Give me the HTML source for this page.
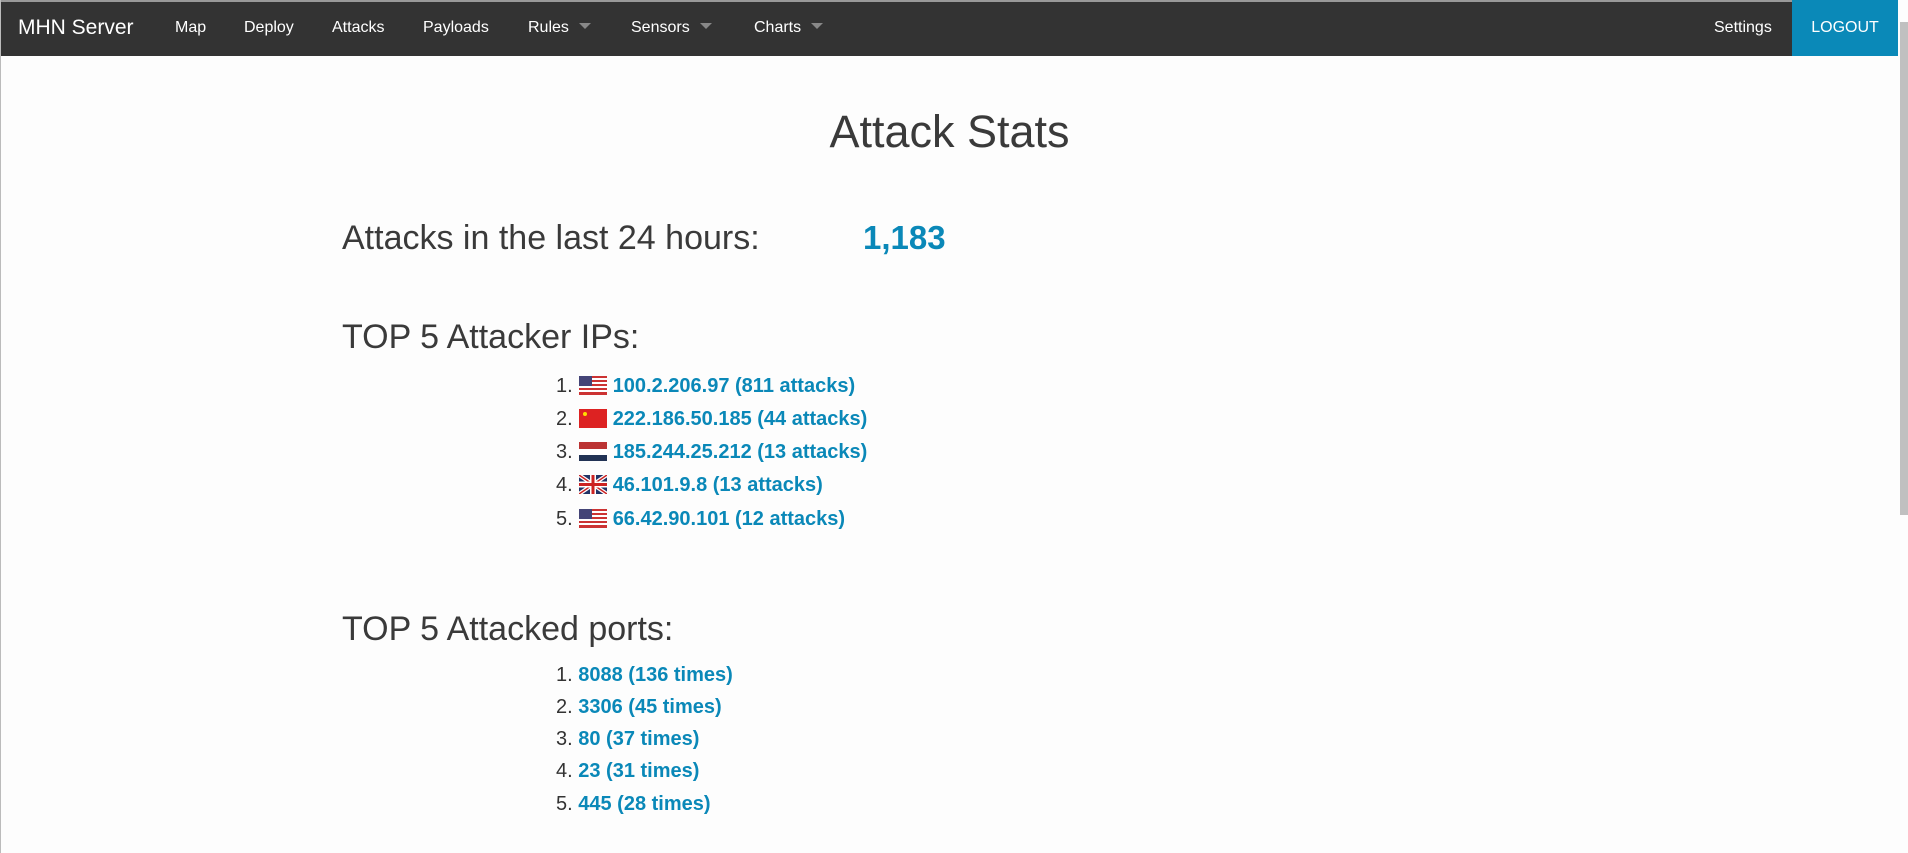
<!DOCTYPE html>
<html><head><meta charset="utf-8"><style>
*{margin:0;padding:0;box-sizing:border-box}
body{width:1908px;height:853px;overflow:hidden;background:#fdfdfd;font-family:"Liberation Sans",sans-serif;position:relative;border-left:1px solid #bbb}
.nav{position:absolute;left:0;top:0;width:1897px;height:56px;background:#333;border-top:2px solid #999}
.nav span{position:absolute;top:17px;color:#fff;font-size:16px}
.car{display:inline-block;width:0;height:0;border-left:6px solid transparent;border-right:6px solid transparent;border-top:6px solid #888;margin-left:10px;vertical-align:3px}
.logout{position:absolute;left:1791px;top:0;width:106px;height:56px;background:#0a89b8;color:#fff;font-size:16px;text-align:center;line-height:56px}
.sb{position:absolute;left:1899px;top:22px;width:9px;height:493px;background:#c0c0c0}
.t{position:absolute;color:#333;white-space:nowrap}
.l{position:absolute;font-size:20px;white-space:nowrap;color:#333}
.l b{color:#0a88b8}
.f{display:inline-block;width:28px;height:19px;vertical-align:-3px;margin:0 6px 0 6px}
</style></head><body>
<div class="nav">
<span style="left:17px;top:14px;font-size:21px">MHN Server</span>
<span style="left:174px">Map</span>
<span style="left:243px">Deploy</span>
<span style="left:331px">Attacks</span>
<span style="left:422px">Payloads</span>
<span style="left:527px">Rules<i class="car"></i></span>
<span style="left:630px">Sensors<i class="car"></i></span>
<span style="left:753px">Charts<i class="car"></i></span>
<span style="left:1713px">Settings</span>
</div>
<div class="logout">LOGOUT</div>
<div class="sb"></div>
<div class="t" style="left:0;width:1897px;text-align:center;top:106px;font-size:45px;color:#3a3a3a">Attack Stats</div>
<div class="t" style="left:341px;top:219px;font-size:34px;color:#3a3a3a">Attacks in the last 24 hours:</div>
<div class="t" style="left:862px;top:219px;font-size:33px;font-weight:bold;color:#0a88b8">1,183</div>
<div class="t" style="left:341px;top:318px;font-size:34px;color:#3a3a3a">TOP 5 Attacker IPs:</div>
<div class="l" style="left:555px;top:375px">1.<svg class="f" viewBox="0 0 28 19"><rect width="28" height="19" fill="#fff"/><g fill="#c33"><rect y="0" width="28" height="2"/><rect y="4" width="28" height="2"/><rect y="8" width="28" height="2"/><rect y="12" width="28" height="2"/><rect y="16" width="28" height="3"/></g><rect width="13" height="10" fill="#447"/></svg><b>100.2.206.97 (811 attacks)</b></div>
<div class="l" style="left:555px;top:408px">2.<svg class="f" viewBox="0 0 28 19"><rect width="28" height="19" fill="#d22"/><circle cx="6" cy="5" r="2" fill="#fd0"/></svg><b>222.186.50.185 (44 attacks)</b></div>
<div class="l" style="left:555px;top:441px">3.<svg class="f" viewBox="0 0 28 19"><rect width="28" height="7" fill="#b33"/><rect y="7" width="28" height="6" fill="#fff"/><rect y="13" width="28" height="6" fill="#235"/></svg><b>185.244.25.212 (13 attacks)</b></div>
<div class="l" style="left:555px;top:474px">4.<svg class="f" viewBox="0 0 28 19"><rect width="28" height="19" fill="#236"/><path d="M0 0L28 19M28 0L0 19" stroke="#fff" stroke-width="4"/><path d="M0 0L28 19M28 0L0 19" stroke="#c22" stroke-width="1.5"/><path d="M14 0V19M0 9.5H28" stroke="#fff" stroke-width="6"/><path d="M14 0V19M0 9.5H28" stroke="#c22" stroke-width="3"/></svg><b>46.101.9.8 (13 attacks)</b></div>
<div class="l" style="left:555px;top:508px">5.<svg class="f" viewBox="0 0 28 19"><rect width="28" height="19" fill="#fff"/><g fill="#c33"><rect y="0" width="28" height="2"/><rect y="4" width="28" height="2"/><rect y="8" width="28" height="2"/><rect y="12" width="28" height="2"/><rect y="16" width="28" height="3"/></g><rect width="13" height="10" fill="#447"/></svg><b>66.42.90.101 (12 attacks)</b></div>
<div class="t" style="left:341px;top:610px;font-size:34px;color:#3a3a3a">TOP 5 Attacked ports:</div>
<div class="l" style="left:555px;top:664px">1. <b>8088 (136 times)</b></div>
<div class="l" style="left:555px;top:696px">2. <b>3306 (45 times)</b></div>
<div class="l" style="left:555px;top:728px">3. <b>80 (37 times)</b></div>
<div class="l" style="left:555px;top:760px">4. <b>23 (31 times)</b></div>
<div class="l" style="left:555px;top:793px">5. <b>445 (28 times)</b></div>
</body></html>
